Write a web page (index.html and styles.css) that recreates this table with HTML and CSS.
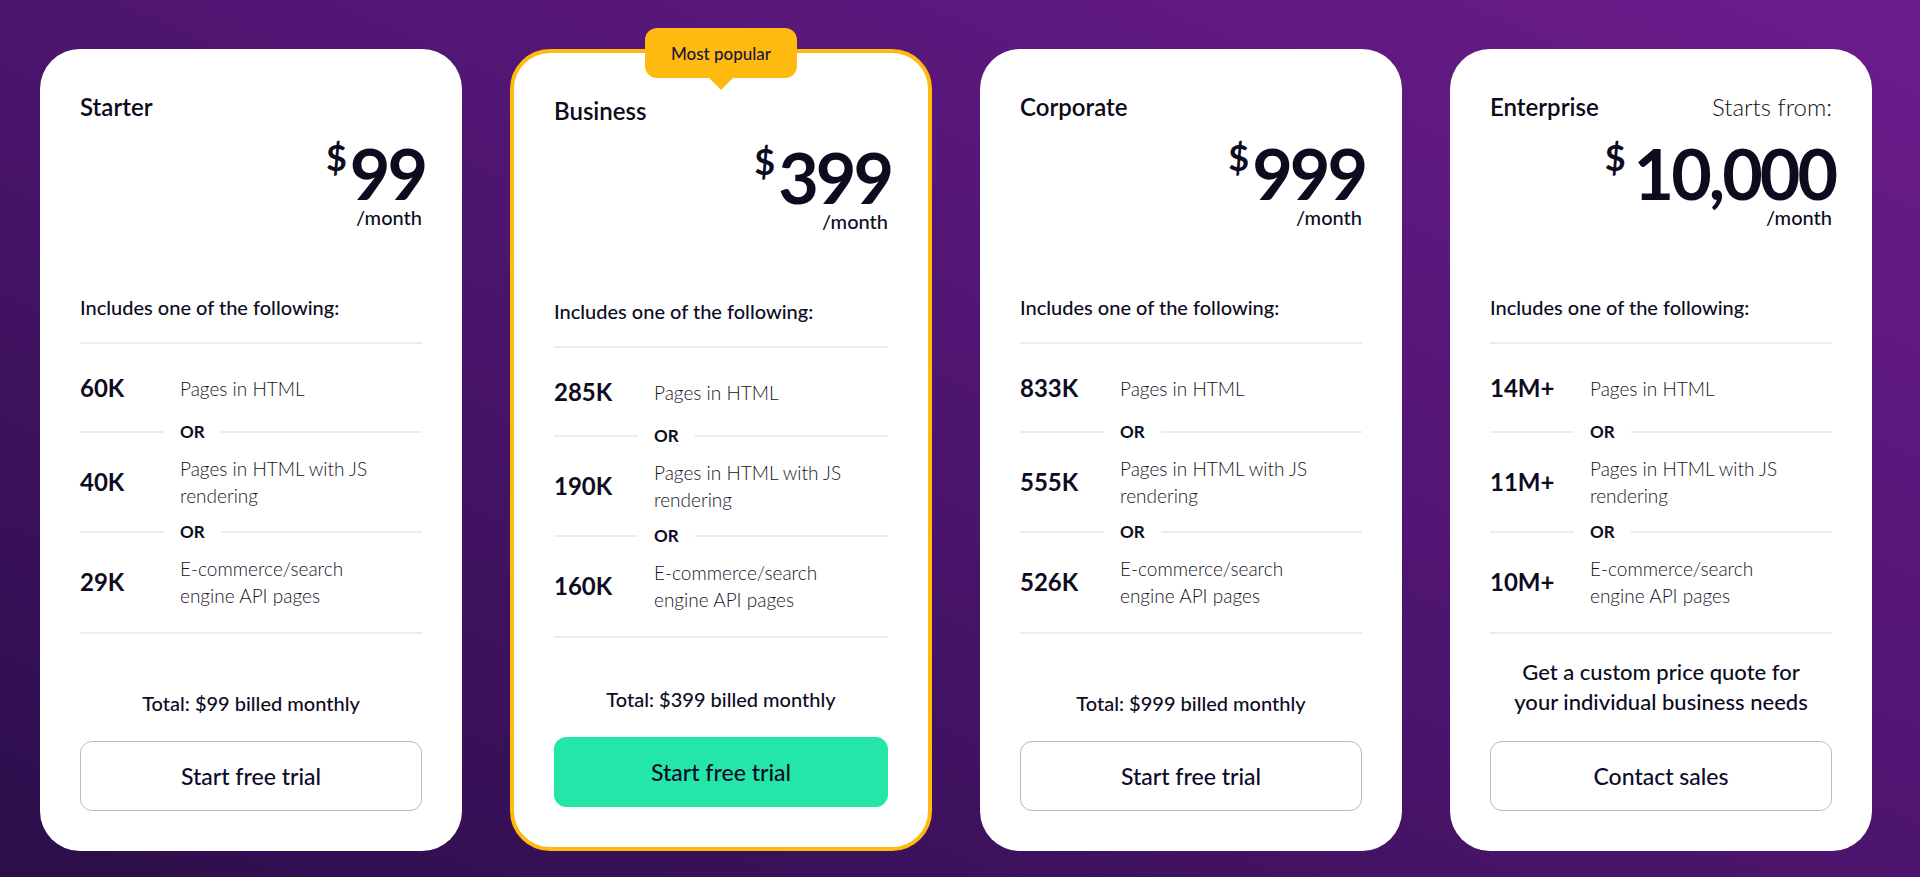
FILE: index.html
```html
<!DOCTYPE html>
<html lang="en">
<head>
<meta charset="utf-8">
<title>Pricing</title>
<link rel="stylesheet" href="styles.css">
</head>
<body>
<main class="pricing">
  <article class="card">
    <div class="card-head"><h2 class="plan">Starter</h2></div>
    <div class="price"><span class="cur">$</span><span class="amount">99</span></div>
    <div class="per">/month</div>
    <p class="includes">Includes one of the following:</p>
    <div class="options">
      <div class="opt"><span class="qty">60K</span><span class="desc">Pages in HTML</span></div>
      <div class="or"><span class="or-line short"></span><span class="or-text">OR</span><span class="or-line"></span></div>
      <div class="opt"><span class="qty">40K</span><span class="desc">Pages in HTML with JS rendering</span></div>
      <div class="or"><span class="or-line short"></span><span class="or-text">OR</span><span class="or-line"></span></div>
      <div class="opt"><span class="qty">29K</span><span class="desc">E-commerce/search engine API pages</span></div>
    </div>
    <div class="foot">
      <p class="total">Total: $99 billed monthly</p>
      <a class="btn" href="#">Start free trial</a>
    </div>
  </article>

  <article class="card popular">
    <div class="badge">Most popular</div>
    <div class="card-head"><h2 class="plan">Business</h2></div>
    <div class="price"><span class="cur">$</span><span class="amount">399</span></div>
    <div class="per">/month</div>
    <p class="includes">Includes one of the following:</p>
    <div class="options">
      <div class="opt"><span class="qty">285K</span><span class="desc">Pages in HTML</span></div>
      <div class="or"><span class="or-line short"></span><span class="or-text">OR</span><span class="or-line"></span></div>
      <div class="opt"><span class="qty">190K</span><span class="desc">Pages in HTML with JS rendering</span></div>
      <div class="or"><span class="or-line short"></span><span class="or-text">OR</span><span class="or-line"></span></div>
      <div class="opt"><span class="qty">160K</span><span class="desc">E-commerce/search engine API pages</span></div>
    </div>
    <div class="foot">
      <p class="total">Total: $399 billed monthly</p>
      <a class="btn btn-green" href="#">Start free trial</a>
    </div>
  </article>

  <article class="card">
    <div class="card-head"><h2 class="plan">Corporate</h2></div>
    <div class="price"><span class="cur">$</span><span class="amount">999</span></div>
    <div class="per">/month</div>
    <p class="includes">Includes one of the following:</p>
    <div class="options">
      <div class="opt"><span class="qty">833K</span><span class="desc">Pages in HTML</span></div>
      <div class="or"><span class="or-line short"></span><span class="or-text">OR</span><span class="or-line"></span></div>
      <div class="opt"><span class="qty">555K</span><span class="desc">Pages in HTML with JS rendering</span></div>
      <div class="or"><span class="or-line short"></span><span class="or-text">OR</span><span class="or-line"></span></div>
      <div class="opt"><span class="qty">526K</span><span class="desc">E-commerce/search engine API pages</span></div>
    </div>
    <div class="foot">
      <p class="total">Total: $999 billed monthly</p>
      <a class="btn" href="#">Start free trial</a>
    </div>
  </article>

  <article class="card">
    <div class="card-head"><h2 class="plan">Enterprise</h2><span class="from">Starts from:</span></div>
    <div class="price"><span class="cur cur-wide">$</span><span class="amount">10,000</span></div>
    <div class="per">/month</div>
    <p class="includes">Includes one of the following:</p>
    <div class="options">
      <div class="opt"><span class="qty">14M+</span><span class="desc">Pages in HTML</span></div>
      <div class="or"><span class="or-line short"></span><span class="or-text">OR</span><span class="or-line"></span></div>
      <div class="opt"><span class="qty">11M+</span><span class="desc">Pages in HTML with JS rendering</span></div>
      <div class="or"><span class="or-line short"></span><span class="or-text">OR</span><span class="or-line"></span></div>
      <div class="opt"><span class="qty">10M+</span><span class="desc">E-commerce/search engine API pages</span></div>
    </div>
    <div class="foot">
      <p class="total quote">Get a custom price quote for<br>your individual business needs</p>
      <a class="btn" href="#">Contact sales</a>
    </div>
  </article>
</main>
</body>
</html>
```

FILE: styles.css
```css
* { box-sizing: border-box; }

html, body { margin: 0; padding: 0; }

body {
  min-height: 877px;
  font-family: Lato, "Open Sans", "Liberation Sans", sans-serif;
  color: #0d0c1f;
  background: linear-gradient(to top right, #2b0e4a 0%, #4e1570 52%, #6c1c8c 100%);
}

.pricing {
  display: flex;
  gap: 48px;
  align-items: stretch;
  padding: 49px 0 0 40px;
}

.card {
  position: relative;
  flex: 0 0 422px;
  min-height: 802px;
  display: flex;
  flex-direction: column;
  background: #fff;
  border-radius: 40px;
  padding: 40px 40px 40px;
}

.card.popular {
  border: 4px solid #ffba10;
}

.badge {
  position: absolute;
  top: -25px;
  left: 50%;
  transform: translateX(-50%);
  width: 152px;
  height: 50px;
  border-radius: 12px;
  background: #ffba10;
  color: #1a1640;
  font-size: 17px;
  font-weight: 500;
  display: flex;
  align-items: center;
  justify-content: center;
}

.badge::after {
  content: "";
  position: absolute;
  left: 50%;
  bottom: -12px;
  transform: translateX(-50%);
  border-left: 12px solid transparent;
  border-right: 12px solid transparent;
  border-top: 12px solid #ffba10;
}

.card-head {
  display: flex;
  justify-content: space-between;
  align-items: baseline;
  height: 36px;
}

.plan {
  margin: 0;
  font-size: 24px;
  line-height: 36px;
  font-weight: 600;
  color: #0b0b1a;
}

.from {
  font-size: 24px;
  line-height: 36px;
  font-weight: 300;
  color: #111;
}

.price {
  margin-top: 13px;
  display: flex;
  justify-content: flex-end;
  align-items: flex-start;
  height: 70px;
}

.cur {
  font-size: 36px;
  line-height: 36px;
  font-weight: 700;
  margin-right: 3px;
  margin-top: 1px;
}

.cur-wide { margin-right: 8px; }

.amount {
  font-size: 70px;
  line-height: 70px;
  font-weight: 700;
  letter-spacing: -3px;
  margin-right: -3px;
}

.per {
  margin-top: -3px;
  text-align: right;
  font-size: 20px;
  line-height: 24px;
  font-weight: 500;
}

.includes {
  margin: 65px 0 0;
  font-size: 20px;
  line-height: 26px;
  font-weight: 500;
}

.options {
  margin-top: 22px;
  border-top: 2px solid #ececec;
  border-bottom: 2px solid #ececec;
  padding: 23px 0;
}

.opt {
  display: grid;
  grid-template-columns: 84px 1fr;
  column-gap: 16px;
  align-items: center;
  min-height: 42px;
}

.qty {
  font-size: 24px;
  line-height: 42px;
  font-weight: 700;
}

.desc {
  max-width: 215px;
  font-size: 19px;
  line-height: 27px;
  font-weight: 300;
  color: #15141f;
}

.or {
  display: flex;
  align-items: center;
  gap: 16px;
  height: 20px;
  margin: 13px 0;
}

.or-line {
  flex: 1;
  height: 2px;
  background: #ececec;
}

.or-line.short { flex: 0 0 84px; }

.or-text {
  font-size: 17px;
  line-height: 20px;
  font-weight: 700;
}

.foot {
  margin-top: auto;
  text-align: center;
}

.total {
  margin: 0 0 24px;
  font-size: 20px;
  line-height: 28px;
  font-weight: 500;
}

.total.quote {
  font-size: 22px;
  line-height: 30px;
}

.btn {
  display: flex;
  align-items: center;
  justify-content: center;
  height: 70px;
  border: 1px solid #b8b6c8;
  border-radius: 12px;
  color: #0d0b2b;
  font-size: 23px;
  font-weight: 500;
  text-decoration: none;
}

.btn-green {
  background: #24e6a8;
  border-color: #24e6a8;
}
```
